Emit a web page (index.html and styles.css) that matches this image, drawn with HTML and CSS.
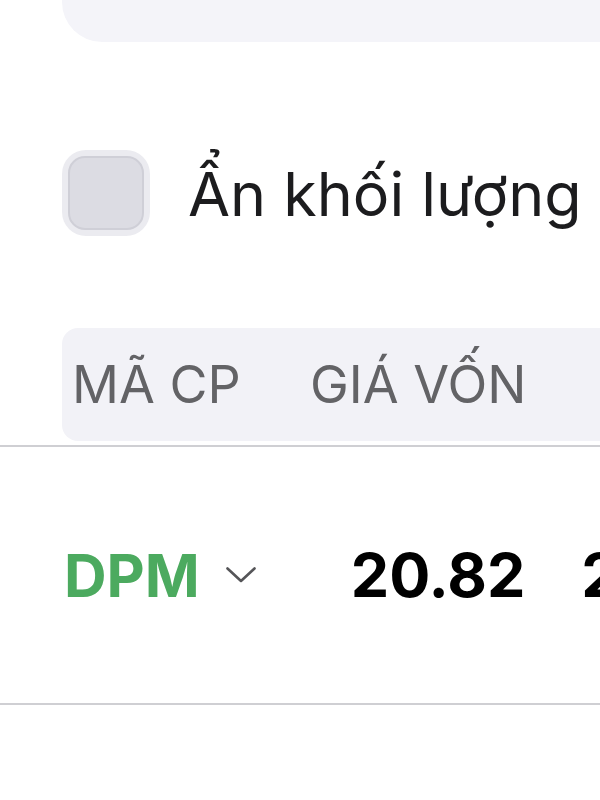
FILE: index.html
```html
<!DOCTYPE html>
<html lang="vi">
<head>
<meta charset="utf-8">
<link rel="stylesheet" href="styles.css">
</head>
<body>
<div class="top-card"></div>
<label class="option">
  <span class="checkbox"><span class="checkbox-inner"></span></span>
  <span class="option-label">Ẩn khối lượng</span>
</label>
<div class="thead">
  <span class="th th-code">MÃ CP</span>
  <span class="th th-cost">GIÁ VỐN</span>
</div>
<div class="row">
  <span class="code">DPM</span>
  <svg class="chev" width="32" height="18" viewBox="0 0 32 18"><path d="M2.5 2.5 L16 15 L29.5 2.5" fill="none" stroke="#555558" stroke-width="2.6" stroke-linecap="round" stroke-linejoin="round"/></svg>
  <span class="num">20.82</span>
  <span class="num num-next">2</span>
</div>
</body>
</html>
```
FILE: styles.css
```css
html, body {
  margin: 0;
  padding: 0;
  background: #ffffff;
  width: 600px;
  height: 800px;
  overflow: hidden;
  font-family: Inter, "Noto Sans", sans-serif;
}
.top-card {
  margin-left: 62px;
  height: 42px;
  background: #f4f4f9;
  border-bottom-left-radius: 40px;
}
.option {
  display: flex;
  align-items: center;
  margin-top: 108px;
  padding-left: 62px;
  gap: 38px;
}
.checkbox {
  box-sizing: border-box;
  width: 88px;
  height: 86px;
  padding: 6px;
  border-radius: 24px;
  background: #ebebf0;
  flex: none;
}
.checkbox-inner {
  display: block;
  box-sizing: border-box;
  width: 100%;
  height: 100%;
  border-radius: 17px;
  background: #dcdce3;
  border: 2px solid #cfcfd7;
}
.option-label {
  font-size: 61px;
  color: #1c1c1e;
  white-space: nowrap;
  margin-top: 2px;
}
.thead {
  margin-top: 92px;
  margin-left: 62px;
  height: 113px;
  background: #f2f2f7;
  border-radius: 16px 0 0 16px;
  display: flex;
  align-items: center;
  white-space: nowrap;
}
.th {
  font-size: 52px;
  color: #636366;
  flex: none;
}
.th-code {
  margin-left: 10px;
  width: 238px;
}
.row {
  margin-top: 4px;
  border-top: 2px solid #cfcfd3;
  border-bottom: 2px solid #cfcfd3;
  height: 256px;
  display: flex;
  align-items: center;
  white-space: nowrap;
  overflow: hidden;
}
.code {
  flex: none;
  margin-left: 64px;
  font-size: 59px;
  font-weight: 700;
  color: #4caa5f;
}
.chev {
  flex: none;
  margin-left: 25px;
  margin-top: 0;
}
.num {
  flex: none;
  font-size: 61px;
  font-weight: 700;
  color: #000;
}
.chev + .num {
  margin-left: 94px;
}
.num-next {
  margin-left: 56px;
}
```
